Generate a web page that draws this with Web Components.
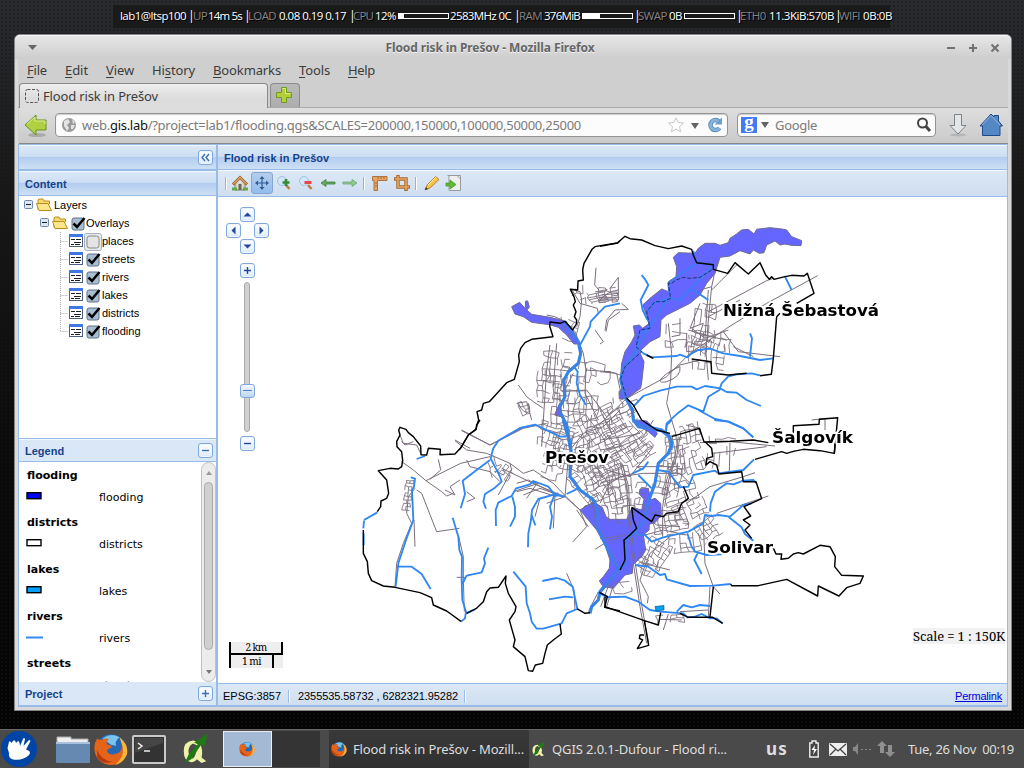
<!DOCTYPE html>
<html lang="en"><head><meta charset="utf-8"><title>Flood risk in Prešov</title>
<style>
html,body{margin:0;height:100%}
body{width:1024px;height:768px;overflow:hidden;background:#080808;font-family:"Noto Sans","Open Sans",sans-serif}
</style></head><body>
<gis-desktop></gis-desktop>
<script>
const define=(name,html,init)=>{
  const t=document.createElement('template');
  t.innerHTML='<style>*{box-sizing:border-box}svg{display:block;overflow:visible}</style>'+html;
  customElements.define(name,class extends HTMLElement{
    constructor(){super();this.attachShadow({mode:'open'}).append(t.content.cloneNode(true));}
    connectedCallback(){if(init)init(this,this.shadowRoot);}
  });
};

/* Label that spreads its letters over the width given in w */
define('fit-text','<style>:host{display:inline-block;white-space:pre;flex:none}span{display:inline-block}</style><span><slot></slot></span>',(h,r)=>{
  const w=+h.getAttribute('w'),s=r.querySelector('span');
  h.style.width=w+'px';
  const n=h.textContent.length,nat=s.getBoundingClientRect().width;
  if(n&&nat)s.style.letterSpacing=((w-nat)/n)+'px';
});

const fox=`<circle cx="16" cy="16" r="14" fill="#2668b4"/><path d="M8 6Q16 0 24 5Q19 9 21 13L16 12Z" fill="#78c4ee"/><path d="M3 6Q5 8 8 7Q12 5 14 7Q10 10 13 12Q16 12 17 14L12 17Q13 22 19 21Q27 20 27 10Q33 16 30 23Q25 32 15 31Q4 30 1 20Q-1 12 3 6Z" fill="#e5641a"/><path d="M24 5Q33 12 31 21Q28 29 20 31Q29 23 27 14Z" fill="#f6b53c"/><path d="M3 17Q7 27 17 28Q8 31 3 24Z" fill="#b53a10"/>`;
const qgis=`<path fill-rule="evenodd" d="M14 7Q4 8 4 18Q4 29 12 30Q16 30 18 27L23 31L28 29L23 25Q25 17 21 9ZM14 10Q9 12 9 19Q10 27 14 26Q18 22 18 12Z" fill="#eef2a8"/><path d="M5 31L9 22L19 11L15 9L29 0L27 13L23 11L12 27Z" fill="#1d7a14"/>`;

define('meter-bar','<style>:host{display:block;width:51px;height:6px;border:1px solid #fff;flex:none}i{display:block;height:100%;background:#fff}</style><i></i>',(h,r)=>{r.querySelector('i').style.width=h.getAttribute('v')+'px'});

define('system-monitor',`<style>
:host{display:flex;align-items:center;width:777px;height:23px;margin:5px 0 6px 113px;padding:0 0 2px 7px;background:#1b1a1b;color:#fff;font:11.5px/21px "Open Sans";text-shadow:1px 1px 0 #000}
.g{color:#858585} fit-text{margin-right:var(--m,3px)} .p{font-size:12.5px;--m:2px}
</style>
<fit-text w="66" style="--m:2px">lab1@ltsp100</fit-text><fit-text w="3" class="p">|</fit-text><fit-text class="g" w="14" style="--m:1px">UP</fit-text><fit-text w="34" style="--m:2px">14m 5s</fit-text><fit-text w="3" class="p" style="--m:1px">|</fit-text><fit-text class="g" w="28">LOAD</fit-text><fit-text w="67">0.08 0.19 0.17</fit-text><fit-text w="3" class="p" style="--m:1px">|</fit-text><fit-text class="g" w="20" style="--m:2px">CPU</fit-text><fit-text w="21" style="--m:2px">12%</fit-text><meter-bar v="5"></meter-bar><fit-text w="61" style="margin-left:1px">2583MHz 0C</fit-text><fit-text w="3" class="p">|</fit-text><fit-text class="g" w="23" style="--m:2px">RAM</fit-text><fit-text w="36" style="--m:2px">376MiB</fit-text><meter-bar v="17"></meter-bar><fit-text w="3" class="p" style="margin-left:1px;--m:1px">|</fit-text><fit-text class="g" w="29" style="--m:2px">SWAP</fit-text><fit-text w="13" style="--m:2px">0B</fit-text><meter-bar v="0"></meter-bar><fit-text w="3" class="p" style="margin-left:1px;--m:1px">|</fit-text><fit-text class="g" w="26">ETH0</fit-text><fit-text w="65" style="--m:1px">11.3KiB:570B</fit-text><fit-text w="3" class="p" style="--m:1px">|</fit-text><fit-text class="g" w="21">WIFI</fit-text><fit-text w="29">0B:0B</fit-text>`);

define('title-bar',`<style>
:host{display:flex;align-items:center;height:24px;padding:0 11px 0 13px;background:linear-gradient(#e6e6e6,#cdcdcd);border-radius:5px 5px 0 0;border-top:1px solid #f8f8f8;color:#666;font:bold 12px/22px "Noto Sans"}
.t{flex:1;text-align:center;text-shadow:0 1px 0 #f3f3f3;padding-right:3px}.b{display:flex;gap:12px}
</style><svg width="9" height="5"><path d="M0 0H9L4.500 5Z" fill="#666"/></svg><div class="t"><fit-text w="209">Flood risk in Prešov - Mozilla Firefox</fit-text></div>
<div class="b"><svg width="10" height="10"><path d="M1 5H9" stroke="#707070" stroke-width="2"/></svg><svg width="10" height="10"><path d="M1 5H9M5 1V9" stroke="#707070" stroke-width="2"/></svg><svg width="10" height="10"><path d="M1.500 1.500L8.500 8.500M8.500 1.500L1.500 8.500" stroke="#707070" stroke-width="2"/></svg></div>`);
</script>
<script>
define('menu-bar',`<style>:host{display:flex;gap:18px;height:23px;padding-left:9px;font:13px/23px "Noto Sans";color:#3c3c3c}u{text-underline-offset:2px}</style>
<fit-text w="20"><u>F</u>ile</fit-text><fit-text w="23"><u>E</u>dit</fit-text><fit-text w="28"><u>V</u>iew</fit-text><fit-text w="43">Hi<u>s</u>tory</fit-text><fit-text w="68"><u>B</u>ookmarks</fit-text><fit-text w="31"><u>T</u>ools</fit-text><fit-text w="27"><u>H</u>elp</fit-text>`);

define('tab-strip',`<style>:host{display:flex;gap:2px;height:25px;border-bottom:1px solid #aaa;padding-left:1px}
.t{width:249px;height:25px;display:flex;align-items:center;gap:4px;padding:0 0 1px 5px;border:1px solid #898989;border-bottom:0;border-radius:4px 4px 0 0;background:linear-gradient(#eee,#dcdcdc 60%);font:13px/22px "Noto Sans";color:#3c3c3c}
.n{width:30px;height:24px;border:1px solid #8b8b8b;border-bottom:0;border-radius:4px 4px 0 0;background:linear-gradient(#bababa,#adadad);padding:3px 0 0 5px}</style>
<div class="t"><svg width="14" height="14"><rect x=".5" y=".5" width="13" height="13" rx="2" fill="none" stroke="#555" stroke-dasharray="3 1.500"/></svg><fit-text w="115">Flood risk in Prešov</fit-text></div>
<div class="n"><svg width="16" height="16"><path d="M5.500 .5h5v5h5v5h-5v5h-5v-5h-5v-5h5Z" fill="#b3d03c" stroke="#6f9b1c"/><path d="M6.500 1.500h3v5h5" fill="none" stroke="#dcec8a"/></svg></div>`);

define('nav-bar',`<style>:host{display:flex;align-items:center;height:36px;background:linear-gradient(#dedede,#cacaca);border-bottom:1px solid #888;font:13px/22px "Noto Sans";color:#7b7b7b;padding:0 0 1px 5px;margin-left:1px}
.f{display:flex;align-items:center;height:24px;border:1px solid #949494;border-radius:4px;background:#fcfcfc;box-shadow:inset 0 1px 1px #ccc}
.u{width:673px;margin:0 9px 0 8px;padding-left:5px}.s{width:199px;padding-left:3px}b{font-weight:normal;color:#111}.sp{flex:1}
.g{width:16px;height:16px;background:#4379f2;color:#fff;font:bold 19px/9px "Liberation Serif";text-align:center;margin-right:4px}</style>
<svg width="23" height="23"><ellipse cx="13" cy="21" rx="9" ry="2" fill="#aaa"/><path d="M1 11L12 1V6H22V16H12V21Z" fill="#b0cf42" stroke="#67931d"/><path d="M3 10L11 3V7H21V10" fill="none" stroke="#ddeb94"/></svg>
<div class="f u"><svg width="16" height="16" style="margin-right:5px"><circle cx="8" cy="8" r="7" fill="#999"/><path d="M3 4L7 2L9 5L6 8L8 11L6 14L3 9ZM11 2L14 5L12 7ZM10 8L14 8L12 12L10 12Z" fill="#e4e4e4"/></svg><fit-text w="499">web.<b>gis.lab</b>/?project=lab1/flooding.qgs&amp;SCALES=200000,150000,100000,50000,25000</fit-text><div class="sp"></div>
<svg width="16" height="16"><path d="M8 .8L10.200 5.500L15.400 6L11.500 9.600L12.600 14.700L8 12L3.400 14.700L4.500 9.600L.6 6L5.800 5.500Z" fill="#fff" stroke="#c6c6c6"/></svg><svg width="8" height="6" style="margin:2px 8px 0 7px"><path d="M0 0H8L4 6Z" fill="#636363"/></svg><svg width="16" height="16" style="margin-right:4px"><path d="M12 4.500A5 5 0 1 0 12.500 11" fill="none" stroke="#4f86b8" stroke-width="4.500"/><path d="M12 4.500A5 5 0 1 0 12.500 11" fill="none" stroke="#87b2d9" stroke-width="3"/><path d="M15 .5V7.500H7.500Z" fill="#6b9fcd"/></svg></div>
<div class="f s"><div class="g">g</div><svg width="8" height="6"><path d="M0 0H8L4 6Z" fill="#636363"/></svg><fit-text w="42" style="margin-left:6px">Google</fit-text><div class="sp"></div><svg width="16" height="16" style="margin-right:3px"><circle cx="6.500" cy="6" r="4.500" fill="none" stroke="#444" stroke-width="2"/><path d="M9.500 9L14 14" stroke="#444" stroke-width="3"/></svg></div>
<svg width="20" height="24" style="margin:0 11px 0 12px"><ellipse cx="10" cy="22" rx="8" ry="1.500" fill="#b5b5b5"/><path d="M6.500 1.500h7v11h4.500l-8 8.500l-8-8.500h4.500Z" fill="#e3e6e8" stroke="#7d8488"/></svg>
<svg width="24" height="24"><path d="M3.500 22.500V13H1L12 1L15 4V2.500H19.500V8L23.500 13H21V22.500Z" fill="#5488c4" stroke="#204a87"/><path d="M3 12L12 2.500L21 12" fill="none" stroke="#8fb5e0"/></svg>`);

define('ext-head',`<style>:host{display:flex;align-items:center;justify-content:space-between;height:25px;flex:none;padding:0 3px 0 6px;font:bold 11px/22px "Liberation Sans";color:#15428b;border-top:1px solid #f2f7fd;border-bottom:1px solid #99bbe8;background:linear-gradient(#dbe8f7,#ccddf3 11px,#adc8ee 11px,#b5cef0 12px,#cddff4)}
:host([flat]){background:#dae7f6}div{height:22px}</style><div><slot></slot></div><slot name="t"></slot>`);

define('tool-btn',`<style>:host{display:block;width:15px;height:15px;border:1px solid #80a8dd;border-radius:3px;background:linear-gradient(#fff,#dcebfc);box-shadow:inset 0 0 0 1px #eef5fe;flex:none}</style><svg width="13" height="13"><path fill="none"/></svg>`,(h,r)=>{
  const p=r.querySelector('path'),k=h.getAttribute('k'),c=h.hasAttribute('soft')?'#3f6fae':'#24469b';
  const m={plus:'M3 6.500H10M6.500 3V10',minus:'M3 6.500H10',fold:'M6 3L3 6.500L6 10M10 3L7 6.500L10 10',up:'M2.500 8.500H10.500L6.500 4.500Z',down:'M2.500 4.500H10.500L6.500 8.500Z',left:'M8.500 2.500V10.500L4.500 6.500Z',right:'M4.500 2.500V10.500L8.500 6.500Z'};
  p.setAttribute('d',m[k]);const solid=/up|down|left|right/.test(k);
  p.setAttribute(solid?'fill':'stroke',c);if(!solid)p.setAttribute('stroke-width','1.400');
});

define('layer-tree',`<style>:host{display:block;height:242px;background:#fff;font:11px/18px "Liberation Sans";color:#000;overflow:hidden;flex:none}
.r{display:flex;align-items:center;height:18px}.r svg{flex:none}.k span{margin-left:1px}</style>`,(h,r)=>{
  const box='<svg width="10" height="10" style="margin-right:2px"><rect x=".5" y=".5" width="8" height="8" rx="1" fill="#dfe5ee" stroke="#6d88ab"/><path d="M2 4.500H7" stroke="#123"/></svg>';
  const fold='<svg width="16" height="16" style="margin-right:2px"><path d="M2 12.500V3L3 2H7L8 4H13.500V7" fill="#f7d86a" stroke="#b98e1c"/><path d="M.5 6.500H12L15.500 13.500H3Z" fill="#fbe68c" stroke="#b98e1c"/></svg>';
  const chk=on=>on?'<svg width="16" height="16"><rect x="2" y="3" width="12" height="12" rx="2" fill="#a9bdd1" stroke="#5f7387"/><path d="M3.500 8.500L7 12L14.500 3" fill="none" stroke="#000" stroke-width="2.500"/></svg>':'<svg width="16" height="16"><rect x="-.5" y=".5" width="17" height="17" rx="2" fill="#e6eaed" stroke="#a5b2bd"/><rect x="2" y="3" width="12" height="12" rx="2.500" fill="#e2e4e6" stroke="#888"/></svg>';
  const grid='<svg width="14" height="14" style="margin-right:2px"><rect x=".5" y=".5" width="13" height="12" fill="#fff" stroke="#4c5e86"/><path d="M0 1.500H14" stroke="#3f78e4" stroke-width="3"/><path d="M2 5.500H6M7 5.500H12M5 8.500H12M2 10.500H5M6 10.500H11" stroke="#222"/></svg>';
  let s=`<div class="r" style="padding-left:5px">${box}${fold}Layers</div><div class="r" style="padding-left:21px">${box}${fold}${chk(1)}<span>Overlays</span></div>`;
  ['places','streets','rivers','lakes','districts','flooding'].forEach((n,i)=>{s+=`<div class="r k" style="padding-left:41px"><svg width="9" height="18"><path d="M.5 0V${i==5?9:18}M.5 9.500H8" stroke="#aaa" stroke-dasharray="1 1" fill="none"/></svg>${grid}${chk(i)}<span>${n}</span></div>`});
  r.innerHTML+=s;
});

define('legend-list',`<style>:host{display:flex;height:220px;background:#fff;overflow:hidden;flex:none;font:11px "DejaVu Sans";color:#000}
.l{flex:1;padding:5px 0 0 8px}.l b{display:block;font-size:11px;line-height:18px;height:22px}.i{display:flex;height:25px;line-height:17px}.i svg{margin:3px 53px 0 -1px;flex:none}
.s{width:15px;border:1px solid #c1c1c1;border-radius:8px;background:#ececec;display:flex;flex-direction:column;align-items:center;padding:8px 0 7px;justify-content:space-between}
.s div{width:9px;height:168px;margin-top:-14px;border:1px solid #aaa;border-radius:5px;background:#d0d0d0}</style>
<div class="l"></div><div class="s"><svg width="6" height="4"><path d="M0 4H6L3 0Z" fill="#999"/></svg><div></div><svg width="6" height="4"><path d="M0 0H6L3 4Z" fill="#777"/></svg></div>`,(h,r)=>{
  const sw={flooding:['#00f'],districts:['#fff'],lakes:['#00a0ff'],rivers:0,streets:0};let s='';
  for(const k in sw)s+=`<b>${k}</b><div class="i"><svg width="20" height="8">${sw[k]?`<rect x="1" y=".7" width="14" height="6" fill="${sw[k][0]}" stroke="#000" stroke-width="1.400"/>`:'<path d="M0 4.500H17" stroke="#338bf5" stroke-width="2"/>'}</svg><span>${k}</span></div>`;
  r.querySelector('.l').innerHTML=s;
});

define('map-toolbar',`<style>:host{display:flex;align-items:center;height:27px;flex:none;background:linear-gradient(#dce8f6,#cfdef0);border-bottom:1px solid #99bbe8;border-top:1px solid #f4f8fd;padding:0 0 1px 6px}
i{width:1px;height:13px;background:#8fb4e4;box-shadow:1px 0 #fff;margin:0 2px 0 1px}span{width:22px;height:22px;padding:3px;flex:none}.on{border:1px solid #88a5cc;border-radius:3px;background:linear-gradient(#b5cdea,#94bdef);padding:2px}</style>
<i style="margin-right:3px"></i>
<span><svg width="16" height="16"><path d="M3 8V15H13V8" fill="#ddd6c4" stroke="#857a63"/><path d="M1 9.500L8 2.500L15 9.500" fill="none" stroke="#95602a" stroke-width="3"/><path d="M1.500 9L8 2.500L14.500 9" fill="none" stroke="#dfa263" stroke-width="1.500"/><rect x="6.500" y="9" width="3" height="6" fill="#666"/><path d="M0 14H5M11 14H16" stroke="#62a848" stroke-width="3"/></svg></span>
<span class="on"><svg width="16" height="16"><path d="M2 8H14M8 2V14" stroke="#315f91" stroke-width="1.200"/><path d="M8 1L10.500 4H5.500ZM8 15L10.500 12H5.500ZM1 8L4 5.500V10.500ZM15 8L12 5.500V10.500Z" fill="#315f91"/></svg></span>
<span><svg width="16" height="16"><circle cx="6" cy="6" r="4.500" fill="#d2e6f8" stroke="#a2c2df"/><path d="M10 10L13.500 14" stroke="#b98043" stroke-width="2.500"/><path d="M6.500 7.500H13.500M10 4V11" stroke="#338b33" stroke-width="2.700"/></svg></span>
<span><svg width="16" height="16"><circle cx="6" cy="6" r="4.500" fill="#d2e6f8" stroke="#a2c2df"/><path d="M10 10L13.500 14" stroke="#b98043" stroke-width="2.500"/><path d="M6.500 7.500H13.500" stroke="#ec4646" stroke-width="3"/></svg></span>
<span><svg width="16" height="16"><path d="M1 8L6 4.500V7H15V9H6V11.500Z" fill="#67ad59" stroke="#378039" stroke-width=".8"/></svg></span>
<span><svg width="16" height="16"><path d="M15 8L10 4.500V7H1V9H10V11.500Z" fill="#92c894" stroke="#68a46e" stroke-width=".8"/></svg></span><i style="margin:0 5px 0 2px"></i>
<span><svg width="16" height="16"><path d="M.5 1.500H15V5.500H5.500V15.500H2V5.500H.5Z" fill="#e3a765" stroke="#b3713b"/><path d="M6 2V4M9 2V4M12 2V4M3 8H5M3 11H5" stroke="#a76731"/></svg></span>
<span><svg width="16" height="16"><path d="M4 0V12H16M0 4H12V16" fill="none" stroke="#aa6932" stroke-width="3.500"/><path d="M4 1V12H15M1 4H12V15" fill="none" stroke="#e2a763" stroke-width="1.600"/></svg></span><i style="margin:0 5px 0 2px"></i>
<span><svg width="16" height="16"><path d="M1 15L3 10L11.500 1.500L15 4.500L6 13Z" fill="#f4c44c" stroke="#c1812d"/><path d="M4 10L12 2" stroke="#fff3a5"/><path d="M1 15L2 12L4 14Z" fill="#333"/></svg></span>
<span><svg width="16" height="16"><path d="M1.500 .5H14.500V15.500H3V.5M11 .5L14.500 4" fill="#eee" stroke="#979b9d"/><path d="M0 8H4V5L10 9.500L4 14V11H0Z" fill="#63b835" stroke="#3a9121" stroke-width=".7"/></svg></span>`);

define('flood-map','<style>:host{display:block;height:486px}</style><svg width="789" height="486" viewBox="218 197 789 486" fill="none" stroke-linejoin="round"></svg>',(h,r)=>{
  let seed=7;const rnd=()=>(seed=(seed*16807)%2147483647)/2147483647;
  const place=(o,d)=>`<path transform="translate(${o}) scale(.33333)" d="${d}"/>`;
  const A='350 220',B='600 220',C='350 420',D='600 420';
  /* street blocks: centre, size, rotation, columns, rows, share of missing segments */
  const block=(cx,cy,w,h,rot,nx,ny,gap)=>{
    const pts=[],a=rot*Math.PI/180,c=Math.cos(a),s=Math.sin(a);let d='';
    for(let i=0;i<=nx;i++){pts[i]=[];for(let j=0;j<=ny;j++){const x=(i/nx-.5)*w+(rnd()-.5)*w/nx*.45,y=(j/ny-.5)*h+(rnd()-.5)*h/ny*.45;pts[i][j]=(cx+x*c-y*s).toFixed(1)+' '+(cy+x*s+y*c).toFixed(1);}}
    for(let i=0;i<=nx;i++)for(let j=0;j<=ny;j++){if(i<nx&&rnd()>gap)d+='M'+pts[i][j]+'L'+pts[i+1][j];if(j<ny&&rnd()>gap)d+='M'+pts[i][j]+'L'+pts[i][j+1];}
    return d;
  };
  const blocks=[[556,367,26,30,8,4,5,.3],[549,387,24,32,4,4,6,.35],[573,386,24,50,3,3,7,.4],[583,415,30,36,0,5,6,.35],[560,408,16,48,3,3,6,.4],[597,373,26,20,5,4,3,.5],
   [556,437,34,26,15,7,6,.25],[570,452,34,34,12,6,6,.3],[600,425,40,30,-28,6,5,.25],[619,417,28,26,-25,5,5,.35],[597,447,42,38,-25,7,7,.22],[628,442,40,32,-30,6,5,.25],[637,449,26,26,-35,5,5,.4],
   [590,483,30,38,-40,6,7,.25],[606,488,36,40,-20,6,7,.25],[620,490,24,46,-8,4,7,.3],[612,510,36,24,0,5,3,.5],[553,466,20,28,10,4,4,.45],
   [608,295,18,14,0,3,4,.3],[598,297,18,12,-10,2,5,.2],[578,297,12,20,-10,2,3,.7],[704,325,20,42,8,4,6,.3],[706,352,36,34,4,6,5,.45],[722,345,16,26,5,3,4,.5],[698,342,20,16,20,4,3,.35],[676,337,20,24,0,3,3,.75],
   [690,433,20,18,-12,4,3,.3],[675,455,16,40,-8,4,7,.25],[693,458,20,26,-20,4,4,.35],[721,453,26,30,5,4,4,.65],[668,478,24,34,10,5,6,.3],[680,493,34,20,-20,5,4,.35],[691,512,34,22,-22,6,5,.3],[670,521,34,22,-10,6,4,.3],[708,530,22,20,-35,5,4,.3],[684,543,32,18,-5,5,4,.4],[655,554,24,28,30,5,6,.25],[647,567,18,16,25,4,3,.35],
   [622,588,18,10,-10,2,2,.3],[670,619,26,8,-5,4,2,.5],[605,462,28,24,-20,5,5,.25],[643,496,16,28,5,3,5,.5],[630,402,28,24,-30,4,4,.5],[408,495,7,30,8,2,9,.25],[505,472,14,14,35,4,4,.6],[495,466,12,20,-20,3,4,.6],[524,408,10,13,-20,2,3,.4],[568,330,18,20,15,3,3,.5]];
  const roads=[[A,'M738 143L734 195L747 210M690 250L742 265L745 280M690 250L665 208L690 215L695 240L690 290L680 320M780 205L805 172V240L750 240Q770 215 805 210M750 232H808M755 225L806 220M768 335L775 300L810 275M735 330L760 365L750 372M590 285Q640 290 675 335L700 400L708 450L705 520L745 600M505 495L530 530L550 545L580 565M500 550L530 545L545 600M505 550Q520 585 540 575L535 550M705 450L780 455L810 465M600 375L590 450L580 600L575 680M620 370L610 500M635 515L710 510L770 590L810 560M660 690L700 640L760 620L810 570M670 460L640 520M335 630L420 675L520 625L590 610M315 660L360 685'],
   [B,'M653 167L500 250L380 325L270 400L200 470L80 535L0 612M350 130L335 200L325 300L318 400L325 480M205 310L215 400L212 480L200 550L215 600L230 650M325 275L500 182L520 175M325 290L420 240M370 335L415 395L540 410M265 330L330 350L380 360M260 340V395L310 390M240 295V345L215 350M275 325L315 355L385 330M0 455L50 460L65 530M180 480Q200 455 240 440Q245 470 200 485Q180 490 180 480M300 210L335 200M205 460L240 435L300 420M258 615L300 625L305 645M400 380L460 410M635 600L680 595M675 597V630M315 355L325 210M335 210L410 135M15 332L20 300L45 270L85 268L65 250M310 310L270 325L300 250M310 310L300 340'],
   [C,'M335 32L420 75L520 22L560 15M315 62L350 90L410 100L480 130L520 160L550 150L610 190L650 232L690 270L740 240M155 125L190 150L228 182L275 215L290 228L310 220M228 182L332 130L420 110M200 210L215 220L260 335L328 325M265 118L272 150L240 178M330 180L300 200L315 225L285 210M350 215L375 235L350 245M150 45L160 70L200 75L212 100M155 65L165 75L190 65M195 205L175 230L170 280L185 310L160 370L140 430L135 500M192 300L195 380M325 345L340 410V480L343 575M350 120L360 140L420 155L450 185M480 130L485 150L445 225M455 145L560 195L645 230L690 270L710 320L668 366M560 192L530 235M645 230L655 110M645 230L590 250M490 215L565 190M680 270L715 320M735 388L780 360L810 355M650 460L672 510L675 570M745 515L715 575M752 560L780 485M320 472H345M500 190L535 180L620 225M500 215L540 205L620 230M520 225L570 205L640 230M615 225L610 325M570 235L555 290'],
   [D,'M235 50L225 110L200 180L188 260V350M60 170L130 160L240 160L270 190M240 50L230 110L206 180L194 260M130 150L110 140L240 140M0 90L60 80L130 50L160 0M60 130L80 200L85 300L100 430L120 560L140 670M66 130L86 200L90 300L106 430L126 560L146 670M390 68L388 155M300 68L390 65L525 78M340 100L500 80M310 310L315 430L340 500L360 522M350 280L505 228M260 250L330 200L430 170L465 158M0 190L100 160M135 345L190 330L260 345M95 262L170 315L240 320M0 355L85 345L135 345M130 450L150 400L210 350M130 450L120 480L145 530L142 550M130 430L210 450M40 495L20 560M330 500L325 590M240 575L325 570M180 598L245 600M205 582L190 630M20 150L90 170L160 80M0 250L30 190L60 170M0 60L70 50L120 40']];
  const rivers=[[A,'M690 375L720 320L722 305L745 280L765 260L810 250M672 440L683 455L680 490L690 525L708 555'],
   [C,'M650 50L630 50L555 14L510 24L445 62L430 85L422 115L450 170L455 185L435 203L405 222L400 245L408 266M420 120L380 150L338 182L345 222L332 265M645 230L615 225L595 200L550 183L540 193L498 205L485 228L445 248L437 270L438 318M487 230L495 260L495 290L480 320M625 220L565 237L546 270L543 300L535 340L534 382M545 285L556 316M612 228L600 260L606 290L600 328M182 172L195 176L192 200L186 210L190 300L168 360L145 430L137 500M145 440L185 440L215 462L242 507M308 293L325 350L328 390L336 410L335 480L337 540L348 575L345 595L333 605M348 580L375 568M337 492L350 467L395 457L405 430L402 415L415 383M490 455L527 500L530 550L540 580L545 605L560 626L580 626L635 610L650 580L682 567L668 500L645 482L620 474L577 483M597 538L645 530L670 532M42 300L82 277M42 302L40 325M41 340V375M200 117L225 108M650 222L685 205M748 517L775 532L810 530'],
   [B,'M125 165L135 178L145 195L122 240L128 270L140 295L155 320L115 345L112 385L130 400L155 412L230 408L240 404L262 412L275 400L295 390L330 386L370 400L420 408L480 420L520 415M450 340L456 355L450 410M100 560L130 528L180 512L230 500L275 500L290 508L315 498L360 505L380 516L410 518L440 540L483 558M480 466L455 460L410 463L385 469L365 490L358 510L325 530L310 575L265 556L235 578L200 610L198 640M295 570L345 597L385 605L430 625L460 652M280 92L290 130L225 175L205 190L210 235L160 250L138 280M335 140L240 240L205 235L170 290L130 350L112 385M265 210L285 213L325 240M555 170L575 210M300 125L315 132L340 135'],
   [D,'M198 30L200 15L215 0M343 0L385 5L430 25L460 52M98 160L130 145L145 125M115 165L155 205M170 150L205 155L220 175L240 202L265 200L280 165L345 152L355 160L430 150L462 118M330 275L332 250L345 215L380 190L400 193L430 182L460 180L470 190M455 250L430 255L390 290L355 285L335 288L315 285L310 310L265 335L190 352L155 365L135 345L105 342M385 290L425 322L435 342L460 362M262 340L275 380L285 395L320 405L365 403M295 395L283 420L305 462M105 435L145 440L180 465L195 462L200 478L270 498L340 497L392 492M0 520L20 532L75 530L115 545L150 570L180 575L250 580L262 592L285 590L305 582L330 595L350 595L368 610M230 575L250 555L275 562L300 555L330 558']];
  const main=[[A,'M645 305L660 330L685 365L692 400L685 430L655 455L642 480L645 530L630 560L632 580L650 615L662 690'],[C,'M640 0L648 30L655 50L663 90L660 170L690 210L730 240L742 265L740 320L775 390L805 450L780 480L750 515L745 540L725 560L720 580'],[B,'M112 388L95 415L70 445L62 480L75 530L97 570L100 600L120 615L185 630L205 645L215 665L213 690'],[D,'M100 0L115 20L185 32L208 50L215 75L205 100L175 130L165 190L140 260L135 300L105 335L75 360L75 430L0 515']];
  const edge=[[A,'M810 62L803 69L770 74L735 80L726 88L702 130L698 150L700 180L684 183L683 210L661 208L672 230L676 245L670 255L678 275L673 290L680 300L679 312L668 330L645 304L630 310L600 306L599 318L609 350L545 358L525 368L512 385L506 405L508 425L493 478L470 488L418 545L400 550L395 570L381 575L386 600L381 615L378 628L355 645L328 690'],
   [C,'M390 0L380 15L378 28L355 45L335 80L315 102L270 104L271 88L235 85L230 105L213 104L212 78L190 50L175 38L168 28L150 22L146 30L150 45L140 65L141 80L155 95L158 122L155 140L145 147L120 145L85 152L110 180L116 220L110 235L93 243L92 260L82 275M40 330V400L52 425L55 460L65 482L100 498L135 502L210 518L245 533L250 555L290 573L333 604M350 580L378 566L400 545L410 515L420 504L445 502L468 468L466 490L475 520L498 560L495 575L478 600L485 625L495 660L490 680L525 710L535 752L548 754L556 735L578 730L585 700L592 675L610 660L634 642L630 612M682 567L705 580L720 578M748 517L772 530L764 562L810 573'],
   [D,'M15 530V560L133 602L175 615L182 578M240 580L265 592L338 592L368 610M133 602L146 676L112 686L128 660L118 655L120 645L132 645M340 500L330 590M392 492L395 497H475L560 478L653 528L655 498L717 528L740 503L780 490L790 468L725 466L704 440L706 410L690 380L660 376L610 402L595 398L580 402L565 415L543 418L545 402L528 402L518 380M455 355L435 330L450 315L430 300L452 288L432 260L485 236L468 185L430 185L425 155L357 162L350 135L330 125L318 135L320 115L338 110L335 85L318 68L312 65L298 25L215 50M312 66L390 64L460 60L505 68M465 118L545 95L560 100L580 94L610 88L660 92L703 100L705 70M95 262L155 305L165 285L190 290L200 280L235 275L245 250L265 235L255 210L250 200M95 262L100 300L110 325L90 345L72 360L75 420L60 450'],
   [B,'M0 79L52 69L75 49L90 56L125 60L165 77L205 86L245 78L275 88L280 105L290 128L340 134L340 148L383 160L405 128L445 162L480 128L497 165L508 178L515 170L522 178L555 170L575 166L612 168L622 160L642 220L590 250M540 280L530 290L520 415L514 463L480 467M440 460L385 465L335 460L333 425L275 417M140 405L160 415M80 535L100 555L125 600L170 630L210 640M580 640V617L657 613L658 598L713 593L703 700']];
  const soft=[[B,'M335 150L300 172L270 175L250 172L228 180L215 190L205 190L212 235L190 245L165 245L140 275L150 325L120 330L108 380L125 395L75 440L62 475L80 535']];
  const flood=[[B,'M605 62L603 77L575 76L555 72L540 75L525 63L500 75L492 98L478 100L460 90L450 102L420 92L390 108L360 112L345 160L320 190L300 225L270 250L200 285L183 300L180 350L150 365L118 395L132 425L126 480L122 505L100 520L85 533L58 537L57 515L70 500L62 470L65 430L75 395L95 365L105 345L100 318L118 315L128 325L148 310L128 255L150 235L185 207L205 215L205 185L228 170L230 140L220 112L235 98L285 100L295 85L315 70L345 70L360 76L385 68L390 55L410 42L425 30L445 28L462 42L470 28L510 23L545 27L560 30L575 50ZM110 600L140 603L155 618L172 640L165 652L145 635L115 615Z'],
   [A,'M485 260L509 247L525 265L545 283L600 292L645 303L668 330L690 372L672 372L650 345L625 322L598 314L545 307L520 290L495 282ZM527 243H533L538 262L530 270L526 262ZM630 548L622 565L614 585L633 590Z'],
   [D,'M-58 272L-45 258L-15 248L7 262L18 290L30 298L80 298L97 262L125 270L132 238L118 222L120 207L145 205L152 240L165 235L182 250L184 285L165 308L148 312L147 330L130 345L137 390L125 410L98 435L97 460L75 465L40 505L10 500L-2 483L10 470L28 445L30 420L15 375L-10 330Z']];
  const g=(arr,attr)=>`<g ${attr}>${arr.map(a=>place(...a)).join('')}</g>`;
  const label=(x,y,w,t)=>`<text x="${x}" y="${y}" textLength="${w}" lengthAdjust="spacingAndGlyphs">${t}</text>`;
  r.querySelector('svg').innerHTML=
   g(flood,'fill="#66f" stroke="#706c85" stroke-width="3"')+
   `<path d="${blocks.map(b=>block(...b)).join('')}" stroke="#796d7b" stroke-width=".85"/>`+
   g(roads,'stroke="#796d7b" stroke-width="3"')+g(rivers,'stroke="#2f87f2" stroke-width="5.500"')+g(main,'stroke="#2f87f2" stroke-width="9.500"')+g(main,'stroke="#6e708c" stroke-width="1.200"')+
   g(flood,'fill="#66f" opacity=".28"')+g(soft,'stroke="#142452" stroke-width="2.500" stroke-dasharray="12 5"')+g(edge,'stroke="#000" stroke-width="4.300"')+
   '<path d="M655 606.500L664 605.500V610L656 611Z" fill="#00a0f5" stroke="#064a70" stroke-width=".6"/>'+
   `<g font-family="DejaVu Sans" font-weight="bold" font-size="16.500" fill="#000" stroke="#fff" stroke-width="4" paint-order="stroke">${label(723,316,156,'Nižná Šebastová')+label(772,443,81,'Šalgovík')+label(545,463,64,'Prešov')+label(707,553,66,'Solivar')}</g>`;
});

define('map-view',`<style>:host{display:block;position:relative;height:486px;background:#fff;overflow:hidden;flex:none}
.c{position:absolute;left:8px;top:10px;display:grid;grid-template-columns:14px 14px 14px;grid-auto-rows:16px;justify-items:center}
.z{position:absolute;left:22px;top:66px;width:15px;display:flex;flex-direction:column;align-items:center}
.tr{width:6px;height:150px;margin:4px 1px 4px 0;border:1px solid #aaa;border-radius:3px;background:#d0d0d0;display:flex;flex-direction:column;align-items:center}
.k{width:15px;height:14px;margin-top:101px;flex:none;border:1px solid #80a8dd;border-radius:3px;background:linear-gradient(#f4f9ff,#bed5f4);padding-top:5px}.k i{display:block;height:1px;background:#4f82c7;margin:0 2px}
.s{position:absolute;left:11px;top:445px;width:54px;height:26px;background:#eee;font:10px/11px "Noto Serif","Liberation Serif",serif;text-align:center}
.s div{height:13px;border:2px solid #000;border-top:0}.s div+div{border-top:0;border-bottom:0;width:45px;padding-top:1px}
.q{position:absolute;right:2px;top:431px;height:16px;background:#f1f1f1;font:13px/16px "Noto Serif","Liberation Serif",serif}</style>
<flood-map></flood-map>
<div class="c"><tool-btn k="up" style="grid-column:2"></tool-btn><tool-btn k="left" style="grid-column:1"></tool-btn><tool-btn k="right" style="grid-column:3"></tool-btn><tool-btn k="down" style="grid-column:2"></tool-btn></div>
<div class="z"><tool-btn k="plus"></tool-btn><div class="tr"><div class="k"><i></i></div></div><tool-btn k="minus"></tool-btn></div>
<div class="s"><div><fit-text w="21">2 km</fit-text></div><div><fit-text w="19">1 mi</fit-text></div></div><div class="q"><fit-text w="92">Scale = 1 : 150K</fit-text></div>`);

define('gis-client',`<style>:host{display:flex;height:563px;border:1px solid #99bbe8;border-bottom-width:2px;background:#99bbe8}
.w{width:198px;flex:none;display:flex;flex-direction:column}.w>*{width:197px}.e{flex:1;margin-left:1px;display:flex;flex-direction:column;min-width:0}
.st{display:flex;align-items:center;flex:1;padding:3px 5px 0 5px;border-top:1px solid #99bbe8;background:linear-gradient(#dce8f6,#cfdef0);font:11px/18px "Liberation Sans";color:#000}
.st i{width:1px;height:13px;background:#9abbe6;box-shadow:1px 0 #fff}a{color:#00d;margin-left:auto}u{text-decoration:underline}</style>
<div class="w"><ext-head><tool-btn slot="t" k="fold" soft></tool-btn></ext-head><ext-head style="margin-top:1px">Content</ext-head><layer-tree></layer-tree>
<ext-head flat style="margin-top:1px;height:23px">Legend<tool-btn slot="t" k="minus" soft></tool-btn></ext-head><legend-list></legend-list><ext-head flat style="height:23px;border:0">Project<tool-btn slot="t" k="plus" soft></tool-btn></ext-head></div>
<div class="e"><ext-head>Flood risk in Prešov</ext-head><map-toolbar></map-toolbar><map-view></map-view><div class="st"><fit-text w="58">EPSG:3857</fit-text><i style="margin:0 9px 0 7px"></i><fit-text w="160">2355535.58732 , 6282321.95282</fit-text><i style="margin-left:6px"></i><a><fit-text w="47"><u>Permalink</u></fit-text></a></div></div>`);

define('app-window',`<style>:host{display:block;width:998px;height:677px;margin-left:14px;border:1px solid #858585;border-radius:6px 6px 0 0;background:#cfcfcf;box-shadow:inset 3px 0 #dadada,inset -3px -3px #d8d8d8}
.b{margin:0 3px}.b menu-bar{margin-bottom:1px}</style>
<title-bar></title-bar><div class="b"><menu-bar></menu-bar><tab-strip></tab-strip><nav-bar></nav-bar><gis-client></gis-client></div>`);

define('task-bar',`<style>:host{display:flex;align-items:center;height:39px;margin-top:18px;background:#4a4a4a;border-top:1px solid #686868;font:13px/38px "Noto Sans";color:#dedede}
svg{flex:none}.p{display:flex;width:97px;height:36px;background:#343434;margin-left:14px}.p div{width:49px;background:#a4bad4;border:1px solid #eee;padding:9px 0 0 15px}
.a{display:flex;align-items:center;width:200px;height:38px;background:linear-gradient(#393939,#303030);margin-left:9px;padding-left:2px;gap:6px}.q{background:none;margin:0;width:221px;padding-left:3px;gap:8px}</style>
<svg width="36" height="36" style="margin-left:1px"><circle cx="18" cy="18" r="18" fill="#0045a6"/><path d="M6.500 17L8 11Q9 9 10.500 12L12 10Q14 8 15 12L17 10Q18.500 10 19 15L22 8Q23 6 24 8L22.500 15L28 9Q30 9 29 11L25 18.500Q31 20 28 24Q22 30 12 28.500Q7 27 8 22Z" fill="#fff"/></svg>
<svg width="34" height="29" style="margin-left:19px"><path d="M1 10V2H15V4H32V10" fill="#eee" stroke="#aaa"/><rect y="7" width="34" height="21" rx="1" fill="#6689b1"/><path d="M0 8H34" stroke="#a8c0db" stroke-width="2"/></svg>
<svg width="34" height="34" viewBox="0 0 32 32" style="margin-left:4px">${fox}</svg>
<svg width="34" height="29" style="margin-left:4px"><rect x="1" y="1" width="32" height="27" rx="1" fill="#333" stroke="#c9c9c9" stroke-width="2"/><path d="M3 18L31 8V3H3Z" fill="#454545"/><path d="M6 8L10 11L6 14M12 16H18" fill="none" stroke="#eee" stroke-width="1.500"/></svg>
<svg width="28" height="30" viewBox="2 0 28 32" style="margin-left:15px">${qgis}</svg>
<div class="p"><div><svg width="16" height="16" viewBox="0 0 32 32">${fox}</svg></div></div>
<div class="a"><svg width="16" height="16" viewBox="0 0 32 32">${fox}</svg><fit-text w="171">Flood risk in Prešov - Mozill...</fit-text></div>
<div class="a q"><svg width="12" height="16" viewBox="3 0 25 32">${qgis}</svg><fit-text w="175">QGIS 2.0.1-Dufour - Flood ri...</fit-text></div>
<fit-text w="22" style="margin-left:16px;font:bold 17px/34px 'Noto Sans'">us</fit-text>
<svg width="10" height="18" style="margin-left:21px"><path d="M3 3V1H7V3H9.200V17H.8V3Z" fill="#444" stroke="#eee" stroke-width="1.400"/><path d="M6 5L2.500 10H5L4 15L8 9H5.500Z" fill="#fff"/></svg>
<svg width="18" height="13" style="margin-left:10px"><rect width="18" height="13" rx="1" fill="#eee"/><path d="M1 1L9 8L17 1M1 12L7 6M17 12L11 6" fill="none" stroke="#444" stroke-width="1.300"/></svg>
<svg width="18" height="14" style="margin-left:6px"><path d="M0 5H2L5 1V13L2 9H0Z" fill="#888"/><path d="M8 7.500H18" stroke="#888" stroke-dasharray="2 2"/></svg>
<svg width="18" height="18" style="margin-left:6px"><path d="M0 6L5 1L10 6H7V13H3V6ZM8 12L13 17L18 12H15V5H11V12Z" fill="#909090"/></svg>
<fit-text w="106" style="margin-left:13px">Tue, 26 Nov  00:19</fit-text>`);

define('gis-desktop',`<style>:host{display:flex;flex-direction:column;width:1024px;height:768px;overflow:hidden;background:radial-gradient(circle,#151515 .6px,transparent .8px) 0 0/4px 4px,linear-gradient(#292b2f,#181818 25%,#0a0a0a 60%,#030303)}:host>*{flex:none}</style>
<system-monitor></system-monitor><app-window></app-window><task-bar></task-bar>`);
</script></body></html>
